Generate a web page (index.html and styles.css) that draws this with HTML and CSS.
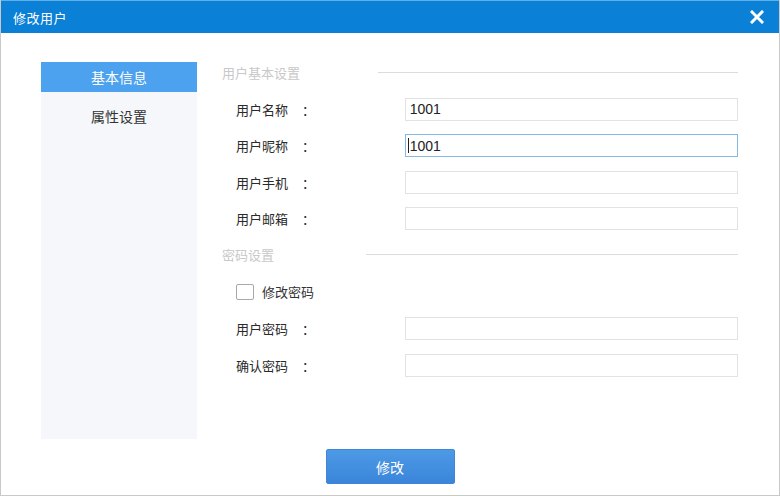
FILE: index.html
```html
<!DOCTYPE html>
<html lang="zh-CN">
<head>
<meta charset="utf-8">
<title>修改用户</title>
<link rel="stylesheet" href="styles.css">
</head>
<body>
<div class="dialog">
  <div class="header">
    <span class="title">修改用户</span>
    <span class="close">
      <svg width="14" height="14" viewBox="0 0 14 14"><path d="M2 2 L12 12 M12 2 L2 12" stroke="#fff" stroke-width="3" stroke-linecap="square"/></svg>
    </span>
  </div>
  <div class="main">
    <div class="sidebar">
      <div class="nav-item active">基本信息</div>
      <div class="nav-item">属性设置</div>
    </div>
    <div class="content">
      <div class="section-title first">
        <span>用户基本设置</span>
        <span class="line line-a"></span>
      </div>
      <div class="group">
        <div class="row"><label>用户名称<span class="colon">：</span></label><div class="input">1001</div></div>
        <div class="row"><label>用户昵称<span class="colon">：</span></label><div class="input focus"><span class="caret"></span>1001</div></div>
        <div class="row"><label>用户手机<span class="colon">：</span></label><div class="input"></div></div>
        <div class="row"><label>用户邮箱<span class="colon">：</span></label><div class="input"></div></div>
      </div>
      <div class="section-title second">
        <span>密码设置</span>
        <span class="line line-b"></span>
      </div>
      <div class="check-row"><span class="checkbox"></span><span>修改密码</span></div>
      <div class="group pw">
        <div class="row"><label>用户密码<span class="colon">：</span></label><div class="input"></div></div>
        <div class="row"><label>确认密码<span class="colon">：</span></label><div class="input"></div></div>
      </div>
    </div>
  </div>
  <div class="footer">
    <button class="btn">修改</button>
  </div>
</div>
</body>
</html>
```
FILE: styles.css
```css
* { box-sizing: border-box; }
html, body { margin: 0; padding: 0; background: #fff; }
body {
  width: 780px; height: 496px; overflow: hidden;
  font-family: "Noto Sans CJK SC", "Liberation Sans", sans-serif;
  font-size: 13px; color: #333;
}
.dialog {
  width: 780px; height: 496px;
  border: 1px solid #c9c9c9; border-top: none;
  display: flex; flex-direction: column;
}
.header {
  height: 33px; background: #0a80d6;
  border-top: 1px solid #5fb0e6;
  display: flex; align-items: center; justify-content: space-between;
  padding: 0 15px 0 12px;
}
.title { color: #fff; font-size: 13px; letter-spacing: 0.5px; }
.close { display: flex; align-items: center; }
.main { display: flex; padding-top: 29px; height: 406px; }
.sidebar {
  margin-left: 40px; width: 156px; height: 377px;
  background: #f5f7fa;
}
.nav-item {
  height: 30px; display: flex; align-items: center; justify-content: center;
  font-size: 14px; color: #333;
}
.nav-item.active { background: #4ca2ee; color: #fff; }
.nav-item + .nav-item { margin-top: 9px; }
.content { margin-left: 25px; width: 516px; }
.section-title {
  height: 20px; display: flex; align-items: center;
  color: #c8c8c8; font-size: 13px;
}
.section-title.second { margin-top: 15px; }
.line { height: 1px; background: #dcdcdc; margin-left: auto; }
.line-a { width: 360px; }
.line-b { width: 372px; }
.group { display: flex; flex-direction: column; gap: 14.67px; margin-top: 16px; }
.group.pw { margin-top: 15px; }
.row { display: flex; align-items: center; height: 22px; }
.row label { width: 183px; padding-left: 14px; color: #2a2a2a; }
.colon { margin-left: 14px; }
.input {
  width: 334px; height: 23px; border: 1px solid #e2e2e2; background: #fff;
  display: flex; align-items: center; padding-left: 4px;
  font-family: "Liberation Sans", sans-serif; font-size: 14px; color: #222;
}
.input.focus { border-color: #86b8e6; padding-left: 2px; }
.caret { width: 1px; height: 15px; background: #222; margin-right: 1px; }
.check-row { display: flex; align-items: center; height: 22px; margin-top: 16px; padding-left: 14px; }
.checkbox {
  width: 18px; height: 16px; border: 1px solid #a8a8a8; border-radius: 2px;
  background: #fff; margin-right: 8px;
}
.footer { display: flex; justify-content: center; padding-top: 10px; }
.btn {
  width: 129px; height: 35px; border: 1px solid #3f86d6; border-radius: 2px;
  background: linear-gradient(#4d9ae6, #3a85da);
  color: #fff; font-family: "Noto Sans CJK SC", sans-serif; font-size: 14px;
  padding: 0;
}
```
